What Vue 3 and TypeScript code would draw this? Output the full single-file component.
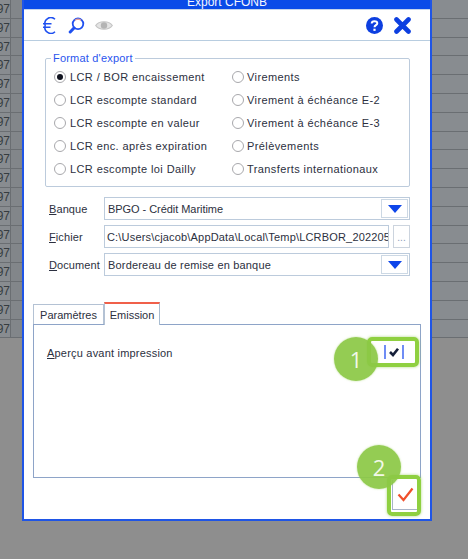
<script setup lang="ts">
const left = ['LCR / BOR encaissement', 'LCR escompte standard', 'LCR escompte en valeur', 'LCR enc. après expiration', 'LCR escompte loi Dailly']
const right = ['Virements', 'Virement à échéance E-2', 'Virement à échéance E-3', 'Prélèvements', 'Transferts internationaux']
const rows = Array.from({ length: 18 }, (_, i) => i)
</script>

<template>
  <div class="page">
    <div class="grid grid-left">
      <div v-for="r in rows" :key="r" class="row"><span class="num">97</span><span class="cell"></span></div>
    </div>
    <div class="window">
      <div class="title"><span>Export CFONB</span></div>
      <div class="toolbar">
        <svg class="ic" width="14" height="17" viewBox="0 0 14 17"><path d="M13 2.2A6 6 0 0 0 3.2 8.500A6 6 0 0 0 13 14.800M1 6.700H9.500M1 10.300H8.500" fill="none" stroke="#1f50f0" stroke-width="1.500"/></svg>
        <svg class="ic" width="17" height="17" viewBox="0 0 17 17"><circle cx="10" cy="6.800" r="5.300" fill="#fff" stroke="#1f50f0" stroke-width="1.800"/><path d="M7 3.200A5 5 0 0 1 13 3.200" fill="none" stroke="#f0a090" stroke-width="1.200"/><path d="M6 11L2.200 15" stroke="#1f50f0" stroke-width="3" stroke-linecap="round"/></svg>
        <svg class="ic" width="18" height="11" viewBox="0 0 18 11"><path d="M.7 5.500C4 .5 14 .5 17.300 5.500C14 10.500 4 10.500 .7 5.500Z" fill="#e4e4e4" stroke="#c4c4c4" stroke-width="1.200"/><circle cx="9" cy="5.500" r="3.200" fill="#b4b4b4"/></svg>
        <span class="spacer"></span>
        <svg class="help" width="17" height="17" viewBox="0 0 17 17"><circle cx="8.500" cy="8.500" r="8.500" fill="#0d3fe0"/><path d="M5.700 6.500C5.700 3.400 11.300 3.400 11.300 6.300C11.300 8.300 8.500 8.100 8.500 10.300" fill="none" stroke="#fff" stroke-width="2"/><rect x="7.400" y="11.700" width="2.200" height="2.200" fill="#fff"/></svg>
        <svg class="close" width="17" height="17" viewBox="0 0 17 17"><path d="M2.500 2.500L14.500 14.500M14.500 2.500L2.500 14.500" stroke="#0d3fe0" stroke-width="4.600" stroke-linecap="round"/></svg>
      </div>
      <div class="body">
        <fieldset class="format">
          <legend>Format d'export</legend>
          <div class="radios">
            <div class="radio-col col-a">
              <div v-for="(t, i) in left" :key="t" class="radio"><span class="dot" :class="{ on: i === 0 }"></span><span>{{ t }}</span></div>
            </div>
            <div class="radio-col">
              <div v-for="t in right" :key="t" class="radio"><span class="dot"></span><span>{{ t }}</span></div>
            </div>
          </div>
        </fieldset>
        <div class="form">
          <div class="frow">
            <label><u>B</u>anque</label>
            <div class="input grow"><span class="val tight">BPGO - Crédit Maritime</span><span class="drop"><i></i></span></div>
          </div>
          <div class="frow">
            <label><u>F</u>ichier</label>
            <div class="input grow path"><span class="val">C:\Users\cjacob\AppData\Local\Temp\LCRBOR_20220506</span></div>
            <span class="dots">...</span>
          </div>
          <div class="frow">
            <label><u>D</u>ocument</label>
            <div class="input grow"><span class="val">Bordereau de remise en banque</span><span class="drop"><i></i></span></div>
          </div>
        </div>
        <div class="tabs">
          <span class="tab">Paramètres</span>
          <span class="tab active">Emission</span>
        </div>
        <div class="panel">
          <span class="lbl"><u>A</u>perçu avant impression</span>
          <span class="check">
            <svg width="20" height="14" viewBox="0 0 20 14"><path d="M1 0V14M19 0V14" stroke="#2450f0" stroke-width="1.300"/><path d="M6 7L9 10L14 3.800" fill="none" stroke="#16203a" stroke-width="2.600"/></svg>
          </span>
        </div>
        <div class="footer">
          <span class="valid">
            <svg width="17" height="17" viewBox="0 0 17 17"><path d="M1.500 8.500L6.500 14L15.500 2.500" fill="none" stroke="#f0502c" stroke-width="2.200"/></svg>
          </span>
        </div>
      </div>
      <span class="hl hl1"></span>
      <span class="mark mark1">1</span>
      <span class="hl hl2"></span>
      <span class="mark mark2">2</span>
    </div>
    <div class="grid grid-right">
      <div v-for="r in rows" :key="r" class="row"></div>
    </div>
  </div>
</template>

<style>
html, body { margin: 0; background: #8e8e8e; }
</style>

<style scoped>
.page {
  width: 468px;
  height: 559px;
  display: flex;
  align-items: flex-start;
  background: #8e8e8e;
  overflow: hidden;
  font-family: "Liberation Sans", Arial, sans-serif;
  font-size: 11px;
  color: #2c3040;
}
.grid { flex: none; display: flex; flex-direction: column; }
.grid-left { width: 22px; }
.grid-right { width: 36px; }
.row {
  height: 18.800px;
  box-sizing: border-box;
  background: #888c90;
  border-bottom: 1px solid #6a6e72;
  display: flex;
}
.num {
  width: 10px;
  overflow: hidden;
  direction: rtl;
  font-size: 12px;
  line-height: 18px;
  color: #363c40;
  border-right: 1px solid #6a6e72;
}
.cell { flex: 1; background: #82868a; }
.window {
  position: relative;
  flex: none;
  width: 410px;
  height: 521px;
  box-sizing: border-box;
  background: #fff;
  border: solid #1f55e6;
  border-width: 0 2px 2px 2px;
  display: flex;
  flex-direction: column;
}
.title {
  height: 9px;
  background: #0a4be8;
  overflow: hidden;
  display: flex;
  justify-content: center;
  color: #f4f6ff;
  font-size: 12px;
  line-height: 9px;
  flex: none;
}
.title span { position: relative; top: -2px; }
.toolbar {
  height: 32px;
  flex: none;
  box-sizing: border-box;
  border-top: 1px solid #c4d4ec;
  border-bottom: 1.500px solid #b8cde0;
  display: flex;
  align-items: center;
  padding: 0 19px 0 18px;
}
.ic { margin-right: 12px; }
.ic:nth-child(2) { margin-right: 10px; }
.spacer { flex: 1; }
.help { margin-right: 11px; }
.body { flex: 1; display: flex; flex-direction: column; padding: 10px 10px 0 9px; min-height: 0; }
.format {
  margin: 0 0 0 12px;
  width: 365px;
  height: 136px;
  box-sizing: border-box;
  border: 1.500px solid #bccbdc;
  border-radius: 2px;
  padding: 0 0 0 8px;
}
legend {
  color: #2a55ee;
  font-size: 11px;
  letter-spacing: .2px;
  padding: 0 2px;
  margin-left: -3px;
  line-height: 14px;
}
.radios { display: flex; padding-top: 1px; }
.radio-col { display: flex; flex-direction: column; }
.col-a { width: 178px; }
.radio {
  height: 22.800px;
  display: flex;
  align-items: center;
  gap: 4px;
  white-space: nowrap;
  letter-spacing: .4px;
}
.radio-col:not(.col-a) .radio { gap: 3px; }
.dot {
  width: 12px;
  height: 12px;
  box-sizing: border-box;
  flex: none;
  border: 1px solid #a8a8ac;
  border-radius: 50%;
  background: #fff;
  display: flex;
  align-items: center;
  justify-content: center;
}
.dot.on::after {
  content: "";
  width: 6px;
  height: 6px;
  border-radius: 50%;
  background: #10131f;
}
.form { margin: 10px 0 0 16px; display: flex; flex-direction: column; gap: 5px; width: 361px; }
.frow { display: flex; align-items: center; height: 23px; }
label { width: 55px; flex: none; letter-spacing: .1px; }
.input {
  height: 23px;
  box-sizing: border-box;
  border: 1.500px solid #bccbdc;
  display: flex;
  align-items: center;
  overflow: hidden;
  position: relative;
}
.grow { flex: 1; min-width: 0; }
.val { padding-left: 3px; white-space: nowrap; letter-spacing: .18px; }
.val.tight { letter-spacing: -.05px; }
.path .val { padding-left: 2px; }
.drop {
  margin-left: auto;
  margin-right: 1px;
  width: 27px;
  height: 19px;
  flex: none;
  box-sizing: border-box;
  border: 1.500px solid #ccd8e4;
  display: flex;
  align-items: center;
  justify-content: center;
}
.drop i {
  width: 0;
  height: 0;
  border-left: 7.500px solid transparent;
  border-right: 7.500px solid transparent;
  border-top: 8px solid #0d45ea;
}
.dots {
  flex: none;
  width: 17px;
  height: 23px;
  margin-left: 4px;
  box-sizing: border-box;
  border: 1px solid #ccd4de;
  text-align: center;
  color: #8a9ab8;
  font-size: 10px;
  line-height: 24px;
}
.tabs { display: flex; align-items: flex-end; margin: 26px 0 0; height: 22px; flex: none; position: relative; z-index: 1; }
.tab {
  box-sizing: border-box;
  height: 20px;
  width: 71px;
  border: 1px solid #b4c2d4;
  border-bottom: 0;
  text-align: center;
  line-height: 20px;
}
.tab.active {
  width: 56px;
  height: 23px;
  margin-bottom: -1px;
  background: #fff;
  border-top: 2px solid #f0604a;
  border-right: 1.500px solid #a8bcd0;
  line-height: 23px;
}
.panel {
  width: 388px;
  height: 154px;
  flex: none;
  box-sizing: border-box;
  border: 1px solid #8ea4c8;
  padding: 22px 13px 0;
  display: flex;
  align-items: flex-start;
  justify-content: space-between;
}
.lbl { letter-spacing: .2px; }
.check { margin: -2px 3px 0 0; line-height: 0; }
.footer { display: flex; justify-content: flex-end; padding: 2px 2px 0 0; }
.valid {
  width: 26px;
  height: 30px;
  box-sizing: border-box;
  border: 1px solid #a8b4c8;
  border-top: 0;
  display: flex;
  align-items: center;
  justify-content: center;
}
.mark {
  position: absolute;
  width: 44px;
  height: 44px;
  border-radius: 50%;
  background: rgba(140, 200, 70, .93);
  color: #f2f8e8;
  font-size: 22px;
  line-height: 44px;
  text-align: center;
  box-shadow: 0 0 2px rgba(140, 200, 70, .6);
  font-family: "Open Sans", sans-serif;
}
.mark1 { left: 310px; top: 337px; }
.mark2 { left: 333px; top: 445px; }
.hl {
  position: absolute;
  box-sizing: border-box;
  border: 4px solid #8fd040;
  border-radius: 5px;
  box-shadow: 0 0 3px rgba(140, 200, 70, .7);
}
.hl1 { left: 343px; top: 337px; width: 52px; height: 30px; }
.hl2 { left: 363px; top: 475px; width: 34px; height: 41px; }
</style>
